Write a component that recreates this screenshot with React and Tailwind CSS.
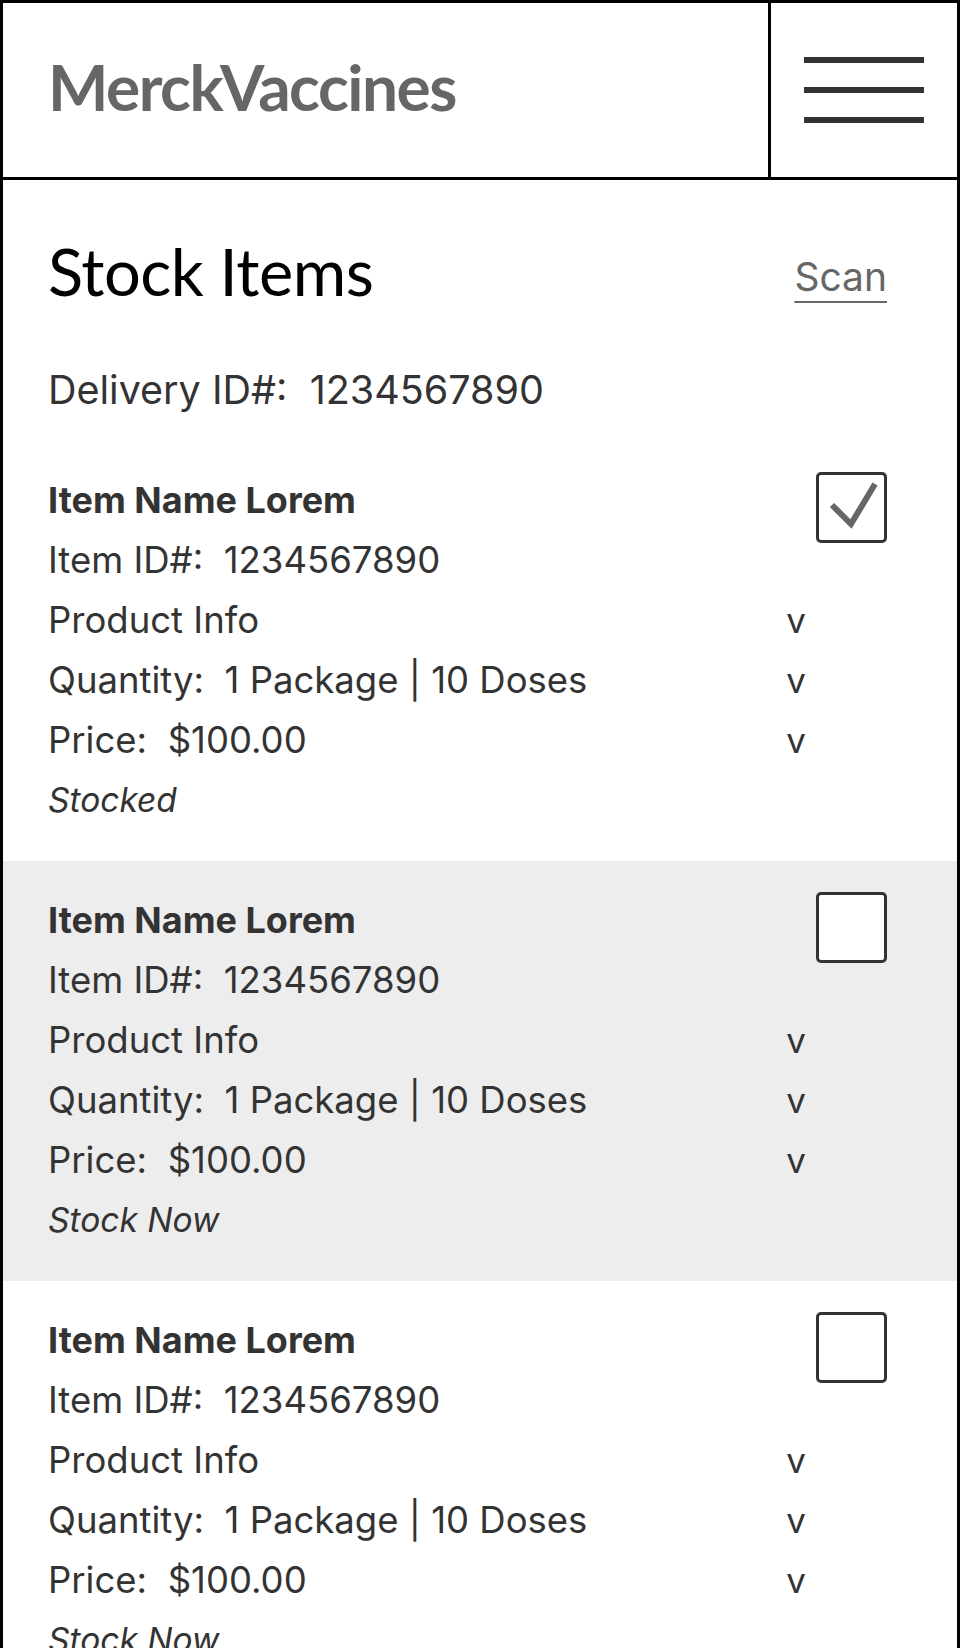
import React from 'react';

const items = [
  { id: 1, checked: true, status: 'Stocked', shaded: false },
  { id: 2, checked: false, status: 'Stock Now', shaded: true },
  { id: 3, checked: false, status: 'Stock Now', shaded: false },
];

const Checkbox = ({ checked }) => (
  <div className="w-[71px] h-[71px] border-[3px] border-[#333] rounded-[5px] bg-white">
    {checked && (
      <svg width="65" height="65" viewBox="0 0 65 65">
        <polyline points="13,30 32,49 56,9" fill="none" stroke="#666" strokeWidth="6" />
      </svg>
    )}
  </div>
);

const Row = ({ children, arrow }) => (
  <div className="h-[60px] flex items-center justify-between">
    <span className="whitespace-nowrap">{children}</span>
    {arrow && <span className="w-[20px] text-center text-[35px]">v</span>}
  </div>
);

const StockItem = ({ item }) => (
  <div className={`${item.shaded ? 'bg-[#ededed]' : 'bg-white'} h-[420px] pt-[29px] pl-[45px] pr-[70px] flex gap-[10px]`}>
    <div className="flex-1 text-[#333] text-[36.5px]">
      <div className="h-[60px] flex items-center font-bold text-[36px]">Item Name Lorem</div>
      <Row>Item ID#:&nbsp; 1234567890</Row>
      <Row arrow>Product Info</Row>
      <Row arrow>Quantity:&nbsp; 1 Package | 10 Doses</Row>
      <Row arrow>Price:&nbsp; $100.00</Row>
      <div className="h-[60px] flex items-center italic text-[33.5px]">{item.status}</div>
    </div>
    <div className="pt-[2px]">
      <Checkbox checked={item.checked} />
    </div>
  </div>
);

export default function App() {
  return (
    <div
      className="w-[960px] h-[1648px] overflow-hidden border-[3px] border-b-0 border-black bg-white"
      style={{ fontFamily: 'Inter, "Noto Sans", sans-serif' }}
    >
      {/* Header */}
      <header className="h-[177px] flex border-b-[3px] border-black">
        <div className="flex-1 flex items-center pl-[45px] pb-[6px]">
          <span className="text-[64px] font-bold text-[#666] tracking-[-1.5px]" style={{ fontFamily: 'Lato, sans-serif' }}>
            MerckVaccines
          </span>
        </div>
        <div className="w-[189px] border-l-[3px] border-black flex flex-col items-center justify-center gap-[24px]">
          <div className="w-[120px] h-[6px] bg-[#333]" />
          <div className="w-[120px] h-[6px] bg-[#333]" />
          <div className="w-[120px] h-[6px] bg-[#333]" />
        </div>
      </header>

      {/* Title */}
      <div className="pl-[45px] pr-[70px]">
        <div className="h-[180px] flex items-center justify-between pt-[2px]">
          <h1 className="text-[65px] leading-none text-black tracking-[-0.5px]" style={{ fontFamily: 'Lato, sans-serif' }}>Stock Items</h1>
          <a href="#" className="mt-[12px] text-[39px] text-[#666] underline underline-offset-[10px] decoration-2">Scan</a>
        </div>
        <div className="h-[81px] pt-[11px] flex items-start text-[39.5px] text-[#333] leading-none whitespace-nowrap">
          Delivery ID#:&nbsp; 1234567890
        </div>
      </div>

      {/* Items */}
      {items.map(item => (
        <StockItem key={item.id} item={item} />
      ))}
    </div>
  );
}
